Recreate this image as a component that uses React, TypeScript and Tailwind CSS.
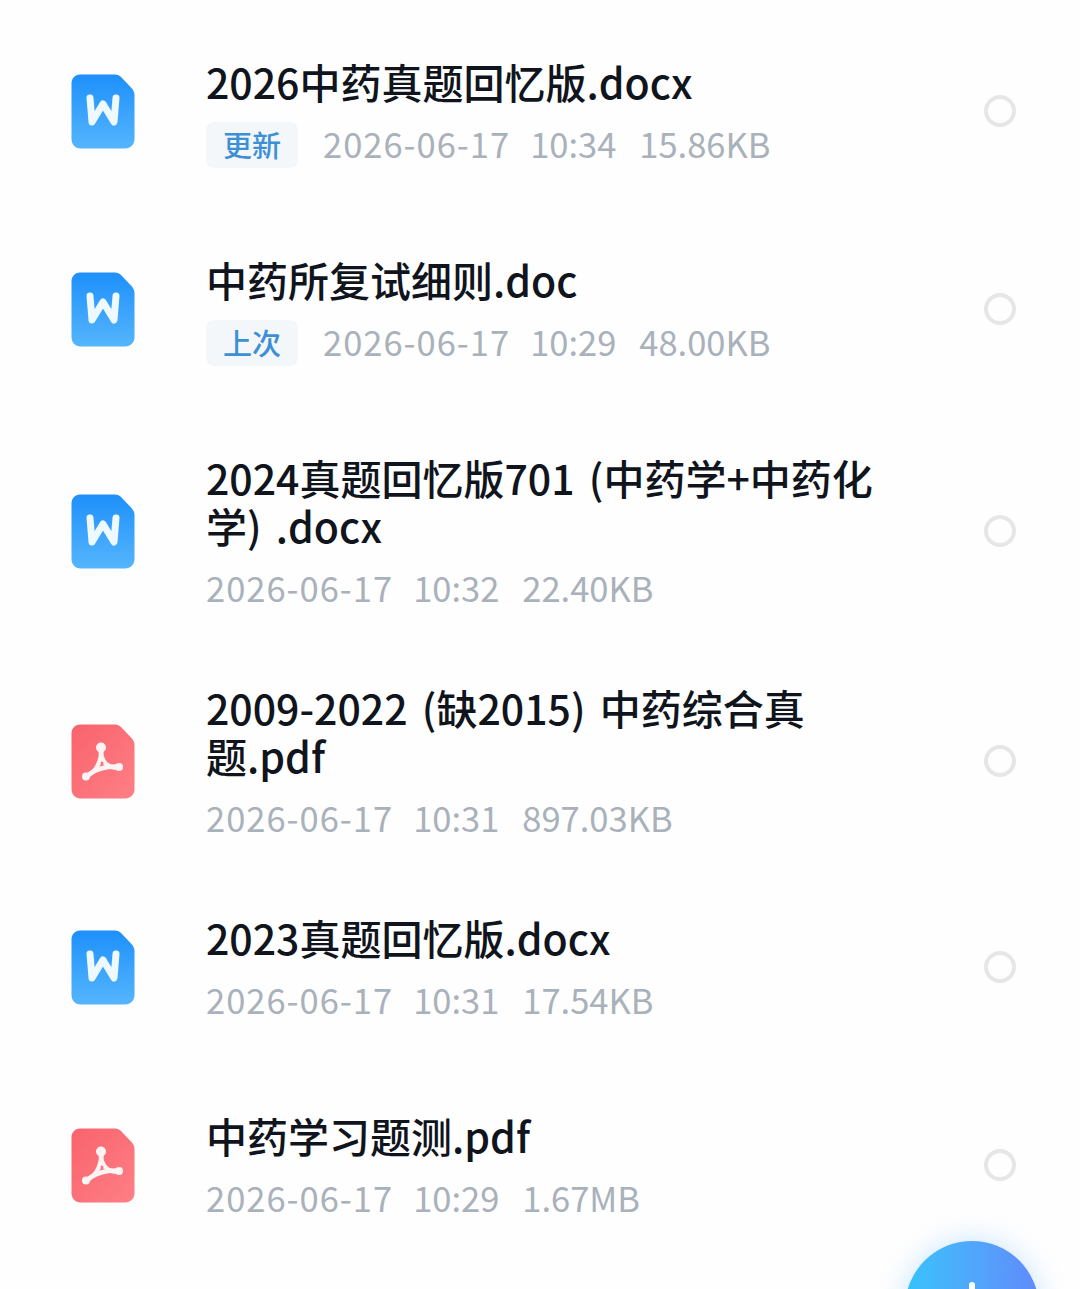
const FONT = "font-['Noto_Sans_CJK_SC','Noto_Sans',sans-serif]";

const SHEET =
  "M9 0.5H44C46.5 0.5 48.5 1.5 50 3L60 13.5C62 15.5 63.5 18 63.5 21V65C63.5 70.5 59.5 74.5 54 74.5H9.5C4.5 74.5 0.5 70.5 0.5 65V9.5C0.5 4.5 4 0.5 9 0.5Z";

function WordIcon() {
  return (
    <svg width="64" height="75" viewBox="0 0 64 75" className="shrink-0">
      <defs>
        <linearGradient id="wordBg" x1="0" y1="0" x2="0" y2="1">
          <stop offset="0" stopColor="#1e90fb" />
          <stop offset="1" stopColor="#55b5fd" />
        </linearGradient>
      </defs>
      <path d={SHEET} fill="url(#wordBg)" />
      <path
        d="M19 24L21 48L32 30L43 48L45 24"
        fill="none"
        stroke="#eef8ff"
        strokeWidth="7"
        strokeLinecap="round"
        strokeLinejoin="round"
      />
    </svg>
  );
}

function PdfIcon() {
  return (
    <svg width="64" height="75" viewBox="0 0 64 75" className="shrink-0">
      <defs>
        <linearGradient id="pdfBg" x1="0" y1="0" x2="1" y2="1">
          <stop offset="0" stopColor="#f9636d" />
          <stop offset="1" stopColor="#fe7f85" />
        </linearGradient>
      </defs>
      <path d={SHEET} fill="url(#pdfBg)" />
      <g fill="none" stroke="#fff4f4" strokeWidth="4.5" strokeLinecap="round" strokeLinejoin="round">
        <path d="M30 23C31.5 29 30 34 27.5 40C25 46 20 50 15 52.5" />
        <path d="M30 23C29 29 31 35 34 39C38 43 44 44.5 48 43" />
        <path d="M16 52C22 47 30 44 37 43C41 42.5 45 42 48 43" />
      </g>
      <circle cx="30" cy="23.5" r="5" fill="#fff4f4" />
      <circle cx="15" cy="52.5" r="4" fill="#fff4f4" />
      <circle cx="48" cy="43" r="4" fill="#fff4f4" />
      <circle cx="31" cy="39" r="1.5" fill="#f9757c" />
    </svg>
  );
}

type Row = {
  title: string[];
  kind: "word" | "pdf";
  tag?: string;
  time: string;
  size: string;
  heightClass: string;
};

const rows: Row[] = [
  { title: ["2026中药真题回忆版.docx"], kind: "word", tag: "更新", time: "10:34", size: "15.86KB", heightClass: "h-[198px]" },
  { title: ["中药所复试细则.doc"], kind: "word", tag: "上次", time: "10:29", size: "48.00KB", heightClass: "h-[198px]" },
  { title: ["2024真题回忆版701 (中药学+中药化", "学) .docx"], kind: "word", time: "10:32", size: "22.40KB", heightClass: "h-[246px]" },
  { title: ["2009-2022 (缺2015) 中药综合真", "题.pdf"], kind: "pdf", time: "10:31", size: "897.03KB", heightClass: "h-[214px]" },
  { title: ["2023真题回忆版.docx"], kind: "word", time: "10:31", size: "17.54KB", heightClass: "h-[198px]" },
  { title: ["中药学习题测.pdf"], kind: "pdf", time: "10:29", size: "1.67MB", heightClass: "h-[198px]" },
];

function FileRow({ row }: { row: Row }) {
  return (
    <div className={`flex items-center pl-[71px] pr-[64px] ${row.heightClass}`}>
      {row.kind === "word" ? <WordIcon /> : <PdfIcon />}
      <div className="ml-[71px] flex-1 translate-y-[1px]">
        {row.title.map((line) => (
          <div
            key={line}
            className="h-[48px] whitespace-pre text-[41px] font-medium leading-[48px] text-[#10141c] [word-spacing:5px]"
          >
            {line}
          </div>
        ))}
        <div className="mt-[15px] flex h-[48px] items-center whitespace-nowrap text-[34.5px] text-[#a9b1bb]">
          {row.tag && (
            <span className="mr-[25px] mt-[2px] flex h-[46px] w-[92px] items-center justify-center rounded-[8px] bg-[#f3f7fa] text-[29px] font-medium text-[#3d8fd6]">
              {row.tag}
            </span>
          )}
          <span className="tracking-[1px]">2026-06-17</span>
          <span className="ml-[20px]">{row.time}</span>
          <span className="ml-[23px]">{row.size}</span>
        </div>
      </div>
      <div className="size-[32px] shrink-0 rounded-full border-[4px] border-[#e6e6e6]" />
    </div>
  );
}

export default function App() {
  return (
    <div className={`relative h-[1289px] w-[1080px] overflow-hidden bg-[#fefefe] pt-[12px] ${FONT}`}>
      {rows.map((row) => (
        <FileRow key={row.title[0]} row={row} />
      ))}
      <div className="absolute left-[905px] top-[1241px] size-[134px] rounded-full bg-gradient-to-r from-[#35c3fb] to-[#5f8afb] shadow-[0_0_28px_rgba(70,170,255,0.3)]">
        <div className="absolute left-[64px] top-[41px] h-[40px] w-[6px] rounded-full bg-white" />
      </div>
    </div>
  );
}
